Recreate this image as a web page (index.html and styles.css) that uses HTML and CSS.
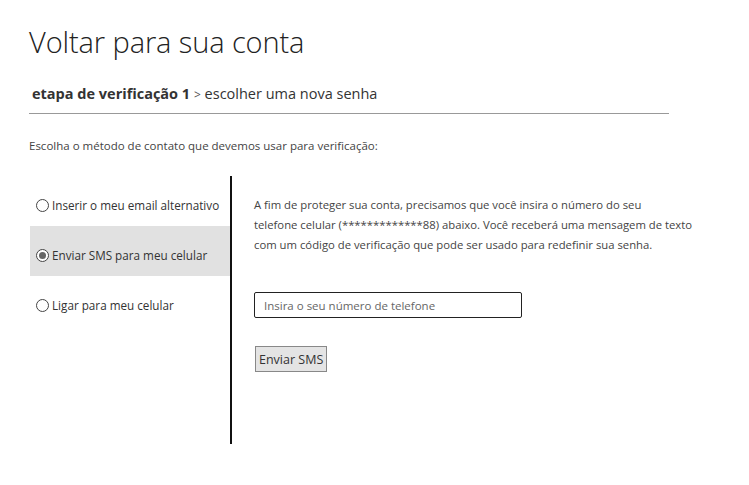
FILE: index.html
```html
<!DOCTYPE html>
<html lang="pt-BR">
<head>
<meta charset="utf-8">
<title>Voltar para sua conta</title>
<link rel="stylesheet" href="styles.css">
</head>
<body>
<div class="page">
  <h1 class="title">Voltar para sua conta</h1>
  <div class="crumbs"><span class="step">etapa de verificação 1</span> <span class="sep">&gt;</span> escolher uma nova senha</div>
  <p class="intro">Escolha o método de contato que devemos usar para verificação:</p>
  <div class="methods">
    <div class="options">
      <label class="option"><span class="radio"></span>Inserir o meu email alternativo</label>
      <label class="option selected"><span class="radio checked"></span>Enviar SMS para meu celular</label>
      <label class="option"><span class="radio"></span>Ligar para meu celular</label>
    </div>
    <div class="detail">
      <p class="desc">A fim de proteger sua conta, precisamos que você insira o número do seu<br>telefone celular (*************88) abaixo. Você receberá uma mensagem de texto<br>com um código de verificação que pode ser usado para redefinir sua senha.</p>
      <input class="phone" type="text" placeholder="Insira o seu número de telefone">
      <button class="send" type="button">Enviar SMS</button>
    </div>
  </div>
</div>
</body>
</html>
```
FILE: styles.css
```css
* { box-sizing: border-box; }
html, body { margin: 0; background: #fff; }
body {
  font-family: "Open Sans", "Noto Sans", "Liberation Sans", sans-serif;
  color: #333;
}
.page { padding: 22px 0 0 29px; }
.title {
  margin: 0;
  font-weight: 300;
  font-size: 29px;
  line-height: 40px;
  color: #222;
  letter-spacing: -0.1px;
}
.crumbs {
  width: 640px;
  margin-top: 20px;
  padding: 0 0 6px 3px;
  border-bottom: 1px solid #999;
  font-size: 14.5px;
  line-height: 24px;
  color: #333;
}
.step { font-weight: 700; color: #333; }
.sep { font-size: 12px; color: #555; }
.intro {
  margin: 20px 0 0 0;
  font-size: 11.5px;
  line-height: 24px;
  color: #444;
}
.methods {
  display: flex;
  margin-top: 18px;
}
.options {
  width: 202px;
  height: 268px;
  margin-left: 1px;
  border-right: 2px solid #111;
}
.option {
  display: flex;
  align-items: center;
  height: 50px;
  padding: 8px 0 0 6px;
  font-size: 11.7px;
  white-space: nowrap;
  color: #333;
}
.option.selected { background: #e1e1e1; }
.radio {
  width: 13px;
  height: 13px;
  margin-right: 3px;
  border: 1px solid #444;
  border-radius: 50%;
  background: #fff;
  flex: none;
  position: relative;
}
.radio.checked::after {
  content: "";
  position: absolute;
  left: 2px;
  top: 2px;
  width: 7px;
  height: 7px;
  border-radius: 50%;
  background: #666;
}
.detail {
  padding: 19px 0 0 22px;
}
.desc {
  margin: 0;
  font-size: 11.3px;
  line-height: 20px;
  color: #444;
}
.phone {
  display: block;
  width: 268px;
  height: 26px;
  margin-top: 37px;
  padding: 0 9px;
  border: 1px solid #222;
  border-radius: 2px;
  font-family: inherit;
  font-size: 11.5px;
  color: #333;
}
.phone::placeholder { color: #666; }
.send {
  display: block;
  margin: 28px 0 0 1px;
  height: 26px;
  padding: 0 3px;
  border: 1px solid #888;
  border-radius: 0;
  background: #e4e4e4;
  font-family: inherit;
  font-size: 12.5px;
  color: #333;
}
```
